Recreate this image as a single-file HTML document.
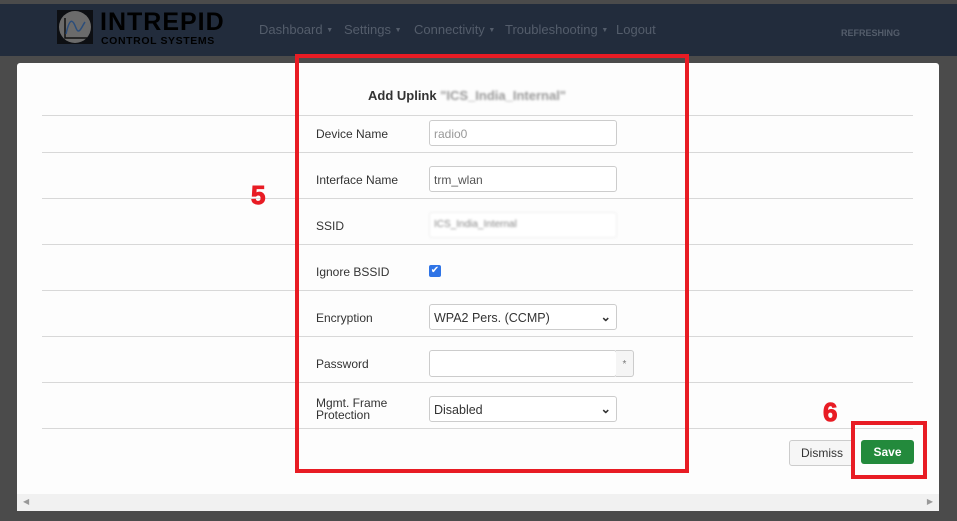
<!DOCTYPE html>
<html><head><meta charset="utf-8"><style>
body{margin:0;width:957px;height:521px;background:#4b4b4b;font-family:"Liberation Sans",sans-serif;position:relative;overflow:hidden}
.hdr{position:absolute;left:0;top:4px;width:957px;height:52px;background:#222c3c}
.nav{position:absolute;top:22px;font-size:13px;color:#545d6b}
.nav i{font-style:normal;font-size:7px;vertical-align:2px}
.modal{position:absolute;left:17px;top:63px;width:922px;height:448px;background:#fdfdfd;border-radius:3px}
.sb{position:absolute;left:0;bottom:0;width:922px;height:17px;background:#f1f1f1}
.line{position:absolute;left:25px;width:871px;height:1px;background:#d8d8d8}
.lbl{position:absolute;left:299px;font-size:12px;color:#333}
.inp{position:absolute;left:412px;width:188px;height:26px;border:1px solid #ccc;border-radius:3px;background:#fff;font-size:12px;color:#555;box-sizing:border-box;padding:6px 0 0 4px}
.red{position:absolute;border:4px solid #e81c24;box-sizing:border-box}
.num{position:absolute;color:#e81c24;font-weight:bold;font-size:26px;-webkit-text-stroke:1px #e81c24}
</style></head><body>
<div class="hdr">
 <div style="position:absolute;left:57px;top:6px;width:36px;height:34px;background:#0d0f13"><div style="position:absolute;left:2px;top:1px;width:32px;height:32px;border-radius:50%;background:#6b6b6b"></div>
 <svg style="position:absolute;left:0;top:0" width="36" height="34"><path d="M8 8V28H30" stroke="#111" stroke-width="1.5" fill="none"/><path d="M9 24C13 6 16 10 19 18C22 26 25 16 28 12" stroke="#2b4d7a" stroke-width="1.5" fill="none"/></svg></div>
 <div style="position:absolute;left:100px;top:4px;font-size:25px;font-weight:bold;color:#000;letter-spacing:1px">INTREPID</div>
 <div style="position:absolute;left:101px;top:31px;font-size:10.5px;font-weight:bold;color:#000;letter-spacing:.6px">CONTROL SYSTEMS</div>
 <div class="nav" style="left:259px;top:18px">Dashboard <i>▼</i></div>
 <div class="nav" style="left:344px;top:18px">Settings <i>▼</i></div>
 <div class="nav" style="left:414px;top:18px">Connectivity <i>▼</i></div>
 <div class="nav" style="left:505px;top:18px">Troubleshooting <i>▼</i></div>
 <div class="nav" style="left:616px;top:18px">Logout</div>
 <div class="nav" style="left:841px;top:24px;font-size:9px;font-weight:bold">REFRESHING</div>
</div>
<div class="modal">
 <div style="position:absolute;left:351px;top:25px;font-size:13px;font-weight:bold;color:#333">Add Uplink <span style="color:#999;filter:blur(1px)">"ICS_India_Internal"</span></div>
 <div class="line" style="top:52px"></div><div class="line" style="top:89px"></div><div class="line" style="top:135px"></div><div class="line" style="top:181px"></div><div class="line" style="top:227px"></div><div class="line" style="top:273px"></div><div class="line" style="top:319px"></div><div class="line" style="top:365px"></div>
 <div class="lbl" style="top:64px">Device Name</div><div class="inp" style="top:57px;color:#999">radio0</div>
 <div class="lbl" style="top:110px">Interface Name</div><div class="inp" style="top:103px">trm_wlan</div>
 <div class="lbl" style="top:156px">SSID</div><div class="inp" style="top:149px;filter:blur(1px);color:#888;font-size:10px;border-color:#eee">ICS_India_Internal</div>
 <div class="lbl" style="top:202px">Ignore BSSID</div>
 <div style="position:absolute;left:412px;top:202px;width:12px;height:12px;background:#2f74e6;border-radius:2px;color:#fff;font-size:10px;line-height:12px;text-align:center">✔</div>
 <div class="lbl" style="top:248px">Encryption</div><div class="inp" style="top:241px;color:#333;font-size:12.5px">WPA2 Pers. (CCMP)<span style="position:absolute;right:5px;top:4px;font-weight:bold">⌄</span></div>
 <div class="lbl" style="top:294px">Password</div><div class="inp" style="top:287px;height:27px"></div>
 <div style="position:absolute;left:599px;top:287px;width:18px;height:27px;border:1px solid #ccc;border-left:none;box-sizing:border-box;background:#f5f5f5;font-size:10px;color:#777;text-align:center;line-height:27px;border-radius:0 3px 3px 0">*</div>
 <div class="lbl" style="top:334px;line-height:12px">Mgmt. Frame<br>Protection</div><div class="inp" style="top:333px;color:#333;font-size:12.5px">Disabled<span style="position:absolute;right:5px;top:4px;font-weight:bold">⌄</span></div>
 <div style="position:absolute;left:772px;top:377px;width:64px;height:24px;border:1px solid #ccc;border-radius:3px;background:#f6f6f6;font-size:12px;color:#333;text-align:center;line-height:24px">Dismiss</div>
 <div style="position:absolute;left:844px;top:377px;width:53px;height:24px;border-radius:3px;background:#238a3c;font-size:12px;font-weight:bold;color:#fff;text-align:center;line-height:24px">Save</div>
 <div class="sb"><span style="position:absolute;left:6px;top:3px;font-size:8px;color:#999">◀</span><span style="position:absolute;right:6px;top:3px;font-size:8px;color:#999">▶</span></div>
</div>
<div class="red" style="left:295px;top:54px;width:394px;height:419px"></div>
<div class="red" style="left:851px;top:421px;width:76px;height:58px"></div>
<div class="num" style="left:251px;top:180px">5</div>
<div class="num" style="left:823px;top:397px">6</div>
</body></html>
